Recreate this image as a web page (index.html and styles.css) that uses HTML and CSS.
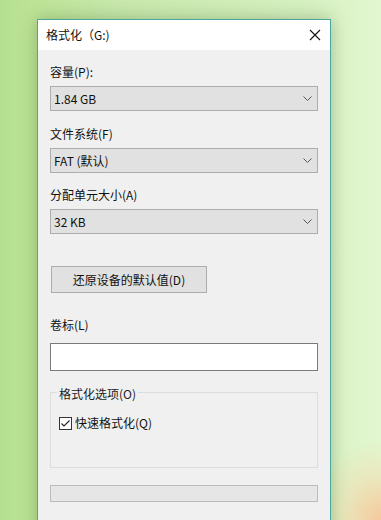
FILE: index.html
```html
<!DOCTYPE html>
<html lang="zh-CN">
<head>
<meta charset="utf-8">
<title>格式化</title>
<link rel="stylesheet" href="styles.css">
</head>
<body>
<div class="dialog">
  <div class="titlebar">
    <span class="title">格式化（G:)</span>
    <svg class="close" width="12" height="12" viewBox="0 0 12 12"><path d="M1 1 L11 11 M11 1 L1 11" stroke="#111" stroke-width="1.1" fill="none"/></svg>
  </div>
  <div class="content">
    <div class="label">容量(P):</div>
    <div class="select"><span>1.84 GB</span><svg class="chev" width="9" height="5" viewBox="0 0 9 5"><polyline points="0.5,0.5 4.5,4.5 8.5,0.5" stroke="#555" stroke-width="1" fill="none"/></svg></div>
    <div class="label">文件系统(F)</div>
    <div class="select"><span>FAT (默认)</span><svg class="chev" width="9" height="5" viewBox="0 0 9 5"><polyline points="0.5,0.5 4.5,4.5 8.5,0.5" stroke="#555" stroke-width="1" fill="none"/></svg></div>
    <div class="label">分配单元大小(A)</div>
    <div class="select"><span>32 KB</span><svg class="chev" width="9" height="5" viewBox="0 0 9 5"><polyline points="0.5,0.5 4.5,4.5 8.5,0.5" stroke="#555" stroke-width="1" fill="none"/></svg></div>
    <div class="button">还原设备的默认值(D)</div>
    <div class="label label-vol">卷标(L)</div>
    <div class="input"></div>
    <fieldset class="group">
      <legend class="legend">格式化选项(O)</legend>
      <div class="check-row">
        <svg class="checkbox" width="13" height="13" viewBox="0 0 13 13"><rect x="0.5" y="0.5" width="12" height="12" fill="#fff" stroke="#333"/><polyline points="2.5,6.5 5,9 10.5,3.5" stroke="#222" stroke-width="1.1" fill="none"/></svg>
        <span>快速格式化(Q)</span>
      </div>
    </fieldset>
    <div class="progress"></div>
  </div>
</div>
</body>
</html>
```

FILE: styles.css
```css
html, body {
  margin: 0;
  padding: 0;
}
body {
  width: 381px;
  height: 520px;
  overflow: hidden;
  font-family: "Noto Sans CJK SC", "Noto Sans", sans-serif;
  font-size: 12px;
  color: #111;
  background:
    radial-gradient(ellipse 70px 80px at 381px 520px, rgba(248, 195, 150, 0.9), rgba(246, 215, 170, 0.45) 55%, rgba(240, 230, 180, 0) 100%),
    linear-gradient(90deg, #b4df92 0px, #bde395 30px, #c8e8ad 120px, #d6f0c0 300px, #e2f7d0 381px);
}
.dialog {
  box-sizing: border-box;
  width: 294px;
  height: 520px;
  margin: 19px 0 0 37px;
  border: 1px solid #4ba79d;
  border-bottom: none;
  background: #f0f0f0;
  box-shadow: 0 0 16px rgba(60, 100, 40, 0.38);
}
.titlebar {
  height: 30px;
  background: #fff;
  display: flex;
  align-items: center;
  justify-content: space-between;
  padding: 0 9px 0 8px;
}
.title {
  line-height: 16px;
  color: #111;
}
.close {
  display: block;
}
.content {
  padding: 14px 12px 0 12px;
  display: flex;
  flex-direction: column;
}
.label {
  line-height: 16px;
  height: 16px;
  margin-bottom: 6px;
  color: #111;
}
.select {
  box-sizing: border-box;
  height: 25px;
  border: 1px solid #adadad;
  background: #e1e1e1;
  display: flex;
  align-items: center;
  justify-content: space-between;
  padding: 0 5px 0 3px;
  margin-bottom: 15px;
  line-height: 16px;
}
.select:nth-of-type(4) {
  margin-bottom: 14px;
}
.chev {
  display: block;
}
.select + .button {
  margin-top: 17px;
}
.button {
  box-sizing: border-box;
  width: 156px;
  height: 27px;
  margin-left: 1px;
  border: 1px solid #adadad;
  background: #e1e1e1;
  display: flex;
  align-items: center;
  justify-content: center;
  line-height: 16px;
}
.label-vol {
  margin-top: 24px;
  margin-bottom: 10px;
}
.input {
  box-sizing: border-box;
  height: 28px;
  border: 1px solid #7a7a7a;
  background: #fff;
  margin-bottom: 11px;
}
.group {
  margin: 0;
  padding: 0 0 36px 6px;
  border: 1px solid #dcdcdc;
  min-inline-size: 0;
}
.legend {
  padding: 4px 2px 0 2px;
  line-height: 16px;
  color: #222;
}
.check-row {
  margin-top: 13px;
  margin-left: 2px;
  display: flex;
  align-items: center;
  gap: 3px;
  line-height: 16px;
}
.checkbox {
  display: block;
}
.progress {
  box-sizing: border-box;
  height: 17px;
  margin-top: 17px;
  border: 1px solid #bcbcbc;
  background: #e6e6e6;
}
```
